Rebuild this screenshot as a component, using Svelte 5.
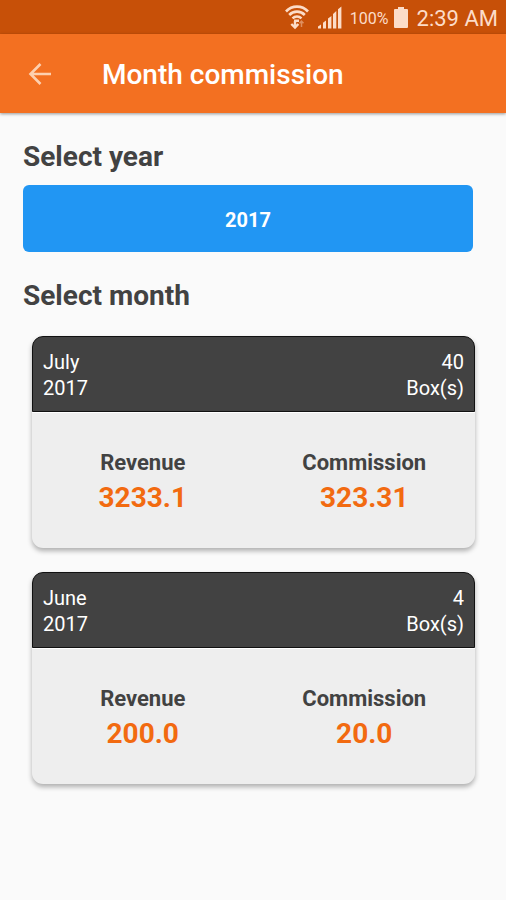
<script>
  let months = [
    { name: 'July', year: 2017, boxes: 40, revenue: '3233.1', commission: '323.31' },
    { name: 'June', year: 2017, boxes: 4, revenue: '200.0', commission: '20.0' }
  ];
</script>

<div class="status-bar">
  <svg class="wifi" width="24" height="26" viewBox="0 0 24 26" fill="none" stroke="currentColor">
    <path d="M1 7.5C7 1 17 1 23 7.5" stroke-width="2.6" />
    <path d="M4.2 11C8.5 6.5 15.5 6.5 19.8 11" stroke-width="2.6" />
    <path d="M7.5 14.3C10 11.8 14 11.8 16.5 14.3" stroke-width="2.4" />
    <path d="M9 15.5H14V18H9Z" fill="currentColor" stroke="none" />
    <path d="M10 17V23M6.3 20L10 23.6L13.4 20" stroke-width="2.4" />
    <path d="M16.5 23V17M14.5 19.2L16.5 17L18.5 19.2" stroke-width="1.5" opacity="0.45" />
  </svg>
  <svg class="signal" width="24" height="23" viewBox="0 0 24 23" fill="currentColor">
    <path d="M0 22.5V20.5L3 18.5V22.5ZM5 22.5V16.8L8 14.6V22.5ZM10 22.5V12.6L13.4 10V22.5ZM15 22.5V8L18.3 5V22.5ZM20 22.5V3.2L23.4 0.4V22.5Z" />
  </svg>
  <span class="percent">100%</span>
  <svg class="battery" width="14" height="21" viewBox="0 0 14 21" fill="currentColor">
    <path d="M4 0H10V2H13Q14 2 14 3V20Q14 21 13 21H1Q0 21 0 20V3Q0 2 1 2H4Z" />
  </svg>
  <span class="time">2:39 AM</span>
</div>

<header class="app-bar">
  <button class="back" aria-label="Back">
    <svg width="24" height="24" viewBox="0 0 24 24" fill="none" stroke="currentColor" stroke-width="2.6">
      <path d="M23 12H3M12.5 2L2.5 12L12.5 22" />
    </svg>
  </button>
  <h1>Month commission</h1>
</header>

<main>
  <h2>Select year</h2>
  <button class="year">2017</button>

  <h2>Select month</h2>
  <div class="months">
    {#each months as month}
      <article class="card">
        <div class="card-head">
          <div>{month.name}<br />{month.year}</div>
          <div class="boxes">{month.boxes}<br />Box(s)</div>
        </div>
        <dl class="card-body">
          <div>
            <dt>Revenue</dt>
            <dd>{month.revenue}</dd>
          </div>
          <div>
            <dt>Commission</dt>
            <dd>{month.commission}</dd>
          </div>
        </dl>
      </article>
    {/each}
  </div>
</main>

<style>
  :global(body) {
    background: #fafafa;
    font-family: Roboto, sans-serif;
    color: #424242;
  }

  .status-bar {
    display: flex;
    align-items: center;
    justify-content: flex-end;
    height: 34px;
    padding: 0 8px;
    background: #c75008;
    color: #fcdcc8;
  }

  .signal {
    margin-left: 9px;
  }

  .percent {
    padding-top: 2px;
    margin-left: 8px;
    font-size: 16px;
  }

  .battery {
    margin-left: 5px;
  }

  .time {
    padding-top: 2px;
    margin-left: 9px;
    font-size: 22px;
  }

  .app-bar {
    display: flex;
    align-items: center;
    height: 79px;
    padding: 0 28px;
    background: #f37021;
    color: #fff;
    box-shadow: 0 1px 3px rgba(0, 0, 0, 0.4);
  }

  button {
    border: 0;
    font-family: inherit;
    cursor: pointer;
  }

  .back {
    display: flex;
    padding: 0;
    background: none;
    color: #fdd0b0;
  }

  h1 {
    margin: 0 0 0 50px;
    padding-top: 3px;
    font-size: 28px;
    line-height: 36px;
    font-weight: 500;
  }

  main {
    padding: 26px 33px 32px 23px;
  }

  h2 {
    margin: 0;
    font-size: 28px;
    line-height: 36px;
    font-weight: 700;
  }

  .year {
    display: block;
    width: 100%;
    height: 67px;
    padding: 2px 0 0;
    margin: 10px 0 26px;
    border-radius: 6px;
    background: #2196f3;
    color: #fff;
    font-size: 20px;
    font-weight: 700;
  }

  .months {
    display: flex;
    flex-direction: column;
    gap: 24px;
    margin: 22px -2px 0 9px;
  }

  .card {
    border-radius: 11px;
    background: #eee;
    box-shadow: 0 3px 5px rgba(0, 0, 0, 0.3);
  }

  .card-head {
    display: flex;
    justify-content: space-between;
    padding: 12px 10px 10px;
    border: 1px solid #111;
    border-radius: 11px 11px 0 0;
    background: #424242;
    color: #fff;
    font-size: 20px;
    line-height: 26px;
  }

  .boxes {
    text-align: right;
  }

  .card-body {
    display: grid;
    grid-template-columns: 1fr 1fr;
    margin: 0;
    padding: 33px 0;
    border-top: 1px solid #fff;
    text-align: center;
  }

  dt {
    font-size: 22px;
    line-height: 34px;
    font-weight: 700;
  }

  dd {
    margin: 0;
    color: #f26a10;
    font-size: 28px;
    line-height: 35px;
    font-weight: 700;
  }
</style>
